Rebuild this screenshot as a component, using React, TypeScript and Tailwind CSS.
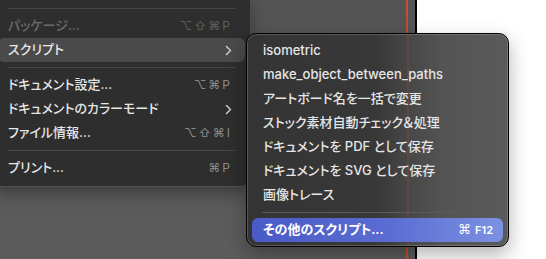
import { Fragment } from "react";

type Row =
  | { kind: "sep" }
  | { kind: "item"; label: string; shortcut?: string; submenu?: boolean; disabled?: boolean; active?: boolean };

const mainRows: Row[] = [
  { kind: "item", label: "パッケージ...", shortcut: "⌥⇧⌘P", disabled: true },
  { kind: "item", label: "スクリプト", submenu: true, active: true },
  { kind: "sep" },
  { kind: "item", label: "ドキュメント設定...", shortcut: "⌥⌘P" },
  { kind: "item", label: "ドキュメントのカラーモード", submenu: true },
  { kind: "item", label: "ファイル情報...", shortcut: "⌥⇧⌘I" },
  { kind: "sep" },
  { kind: "item", label: "プリント...", shortcut: "⌘P" },
];

const scripts = [
  "isometric",
  "make_object_between_paths",
  "アートボード名を一括で変更",
  "ストック素材自動チェック＆処理",
  "ドキュメントを PDF として保存",
  "ドキュメントを SVG として保存",
  "画像トレース",
];

function Chevron() {
  return (
    <svg width="7" height="11" viewBox="0 0 7 11" fill="none" className="text-[#c8c8c8]">
      <path d="M1.5 1.5 5.5 5.5 1.5 9.5" stroke="currentColor" strokeWidth="1.6" strokeLinecap="round" strokeLinejoin="round" />
    </svg>
  );
}

function MainMenu() {
  return (
    <div className="absolute left-[-8px] top-0 w-[259px] rounded-b-[10px] border border-t-0 border-[#4f4f4f] bg-[#2e2e2e] px-[5px] pb-[6px] shadow-[0_6px_16px_rgba(0,0,0,0.35)]">
      <div className="h-[14px] px-[10px] pt-[8px]">
        <div className="h-px bg-[#464646]" />
      </div>
      {mainRows.map((row, i) =>
        row.kind === "sep" ? (
          <div key={i} className="h-[11px] px-[10px] py-[5px]">
            <div className="h-px bg-[#464646]" />
          </div>
        ) : (
          <div
            key={i}
            className={`flex h-[24px] items-center justify-between rounded-[6px] pl-[10px] pr-[13px] ${
              row.active ? "bg-[#4a4a4a]" : ""
            }`}
          >
            <span className={`text-[13px] font-medium ${row.disabled ? "text-[#6c6c6c]" : "text-[#e6e6e6]"}`}>
              {row.label}
            </span>
            {row.submenu ? (
              <Chevron />
            ) : (
              <span
                className={`font-['Inter','DejaVu_Sans',sans-serif] text-[12px] tracking-[2px] ${
                  row.disabled ? "text-[#5f5f5f]" : "text-[#8a8a8a]"
                }`}
              >
                {row.shortcut}
              </span>
            )}
          </div>
        )
      )}
    </div>
  );
}

function ScriptMenu() {
  return (
    <div className="absolute left-[246px] top-[33px] h-[214px] w-[263px] overflow-hidden rounded-[10px] border border-black bg-[linear-gradient(to_right,#343434_0%,#383838_50%,#474747_62%,#545454_75%,#5a5a5a_100%)] p-[5px] shadow-[inset_0_0_0_1px_rgba(255,255,255,0.18),0_8px_20px_rgba(0,0,0,0.3)]">
      <div className="pointer-events-none absolute left-[160px] top-0 h-full w-[2px] bg-[#c0502e]/20" />
      {scripts.map((s) => (
        <div key={s} className="relative flex h-[24px] items-center pl-[11px]">
          <span className="text-[13px] font-medium text-[#e6e6e6]">{s}</span>
        </div>
      ))}
      <div className="relative h-[11px] px-[10px] py-[5px]">
        <div className="h-px bg-[#5a5a5a]" />
      </div>
      <div className="relative flex h-[24px] items-center justify-between rounded-[6px] bg-[linear-gradient(to_right,#4a5ac8,#5b6dd2_55%,#7d91e2)] pl-[11px] pr-[10px]">
        <span className="text-[13px] font-semibold text-white">その他のスクリプト...</span>
        <span className="flex items-center gap-[4px] font-['Inter','DejaVu_Sans',sans-serif] text-white">
          <span className="text-[13px]">⌘</span>
          <span className="text-[11px] font-semibold">F12</span>
        </span>
      </div>
    </div>
  );
}

export default function App() {
  return (
    <div className="relative flex h-[259px] w-[546px] overflow-hidden bg-white font-['Inter','Noto_Sans_CJK_JP',sans-serif] [font-feature-settings:'palt']">
      <div className="flex h-full w-[417px] border-r-2 border-black bg-[linear-gradient(to_bottom,#545454,#5c5c5c)]">
        <div className="h-full w-[408px] border-r-2 border-[#c0502e]" />
      </div>
      <div className="flex-1 bg-white" />
      <Fragment>
        <MainMenu />
        <ScriptMenu />
      </Fragment>
    </div>
  );
}
